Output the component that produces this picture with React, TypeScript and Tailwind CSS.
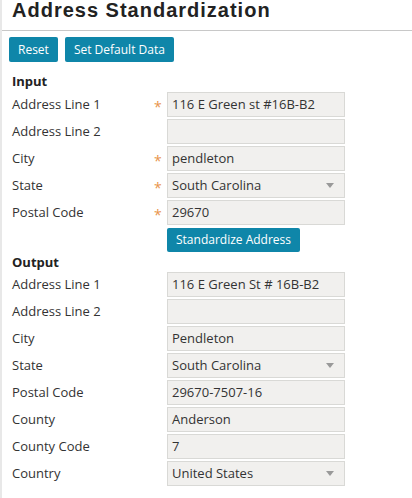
type Row = { label: string; value: string; required?: boolean; select?: boolean };

const inputRows: Row[] = [
  { label: "Address Line 1", value: "116 E Green st #16B-B2", required: true },
  { label: "Address Line 2", value: "" },
  { label: "City", value: "pendleton", required: true },
  { label: "State", value: "South Carolina", required: true, select: true },
  { label: "Postal Code", value: "29670", required: true },
];

const outputRows: Row[] = [
  { label: "Address Line 1", value: "116 E Green St # 16B-B2" },
  { label: "Address Line 2", value: "" },
  { label: "City", value: "Pendleton" },
  { label: "State", value: "South Carolina", select: true },
  { label: "Postal Code", value: "29670-7507-16" },
  { label: "County", value: "Anderson" },
  { label: "County Code", value: "7" },
  { label: "Country", value: "United States", select: true },
];

function FieldRow({ row }: { row: Row }) {
  return (
    <div className="flex h-[27px] items-center">
      <div className="w-[142px] text-[13px] text-[#333]">{row.label}</div>
      <div className="w-[13px] pt-[4px] text-[14px] text-[#e8944c]">{row.required ? "*" : ""}</div>
      <div className="flex h-[25px] w-[178px] items-center justify-between border border-[#d9d9d6] bg-[#f1f0ee] pl-[4px] pr-[10px] text-[13px] text-[#333]">
        <span>{row.value}</span>
        {row.select && (
          <svg width="8" height="5" viewBox="0 0 8 5">
            <path d="M0 0h8L4 5z" fill="#999" />
          </svg>
        )}
      </div>
    </div>
  );
}

export default function App() {
  return (
    <div
      className="h-[498px] w-[412px] overflow-hidden border-l-2 border-[#e8e8e8] bg-white"
      style={{ fontFamily: '"Open Sans", sans-serif' }}
    >
      <div className="h-[31px] border-b border-[#c8c8c8] pl-[10px]">
        <h1
          className="text-[20px] font-bold leading-[20px] tracking-[1px] text-[#222]"
          style={{ fontFamily: '"Liberation Sans", Arial, sans-serif' }}
        >
          Address Standardization
        </h1>
      </div>

      <div className="flex gap-[7px] pl-[7px] pt-[6px]">
        <button className="h-[25px] rounded-[2px] bg-[#0f86a9] px-[9px] text-[12px] text-white">Reset</button>
        <button className="h-[25px] rounded-[2px] bg-[#0f86a9] px-[9px] text-[12px] text-white">Set Default Data</button>
      </div>

      <div className="pl-[10px]">
        <div className="mt-[9px] h-[20px] text-[13px] font-bold leading-[20px] text-[#222]">Input</div>
        <div>
          {inputRows.map((r) => (
            <FieldRow key={r.label} row={r} />
          ))}
        </div>
        <div className="pl-[155px]">
          <button className="h-[24px] rounded-[2px] bg-[#0f86a9] px-[9px] text-[12px] text-white">
            Standardize Address
          </button>
        </div>
        <div className="h-[20px] text-[13px] font-bold leading-[20px] text-[#222]">Output</div>
        <div className="mt-[-1px]">
          {outputRows.map((r) => (
            <FieldRow key={r.label} row={r} />
          ))}
        </div>
      </div>
    </div>
  );
}
